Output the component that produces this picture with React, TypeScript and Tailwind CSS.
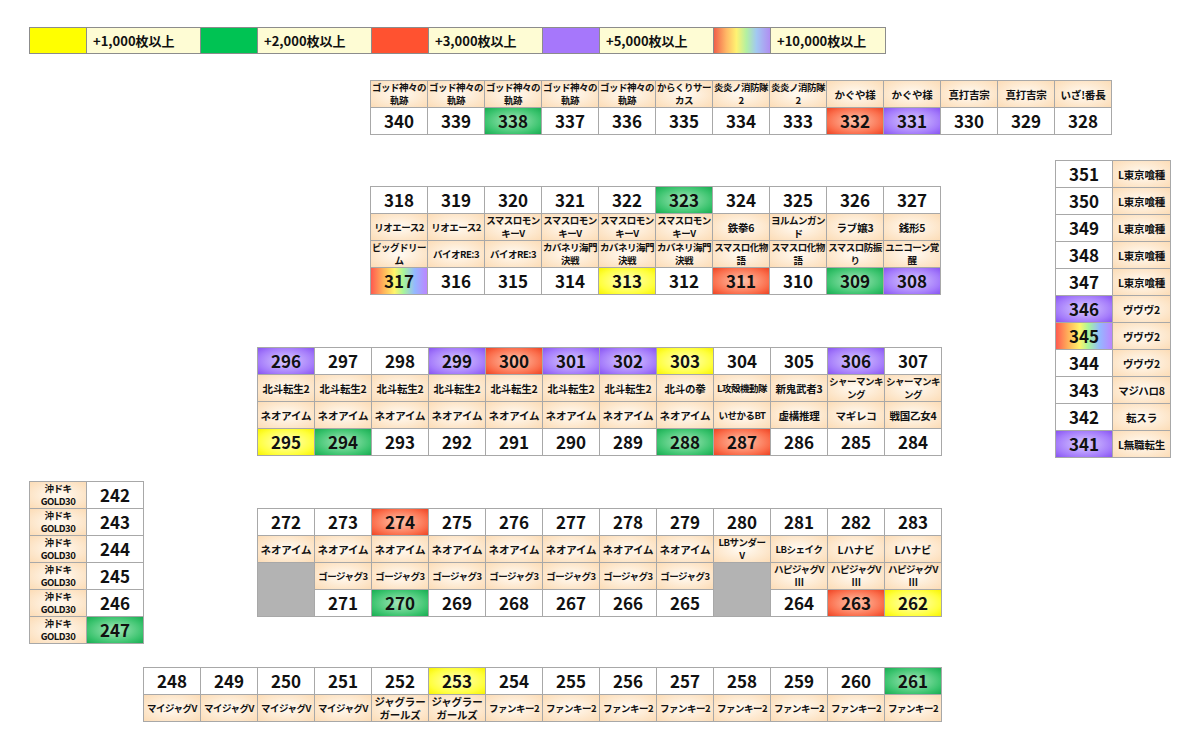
import { clsx } from 'clsx'

type Tone = 'y' | 'g' | 'r' | 'p' | 'rb'
type Cell =
  | { kind: 'num'; n: number; tone?: Tone }
  | { kind: 'name'; t: string }
  | { kind: 'gray' }

const n = (v: number, tone?: Tone): Cell => ({ kind: 'num', n: v, tone })
const t = (s: string): Cell => ({ kind: 'name', t: s })
const gray: Cell = { kind: 'gray' }
const rep = (s: string, k: number) => Array.from({ length: k }, () => t(s))

const TONE: Record<Tone, string> = {
  y: 'bg-[radial-gradient(ellipse_at_center,#ffffc4_0%,#ffff3c_70%,#f8f400_100%)]',
  g: 'bg-[radial-gradient(ellipse_at_center,#a6e8bb_0%,#3cc46f_70%,#18ad52_100%)]',
  r: 'bg-[radial-gradient(ellipse_at_center,#ffc6ad_0%,#fb6e4c_70%,#ee4424_100%)]',
  p: 'bg-[radial-gradient(ellipse_at_center,#d9ccff_0%,#a57cfb_70%,#8855f2_100%)]',
  rb: 'bg-[linear-gradient(90deg,#ff5a50_0%,#ffb25a_22%,#fff46a_42%,#a8f59a_58%,#94b8ff_78%,#bb86ff_100%)]',
}

const LINE = 'border-[#a8a8a8]'
const PEACH = 'bg-[radial-gradient(ellipse_at_center,#fff8ee_10%,#fcdcb6_100%)]'

function SheetCell({ cell }: { cell: Cell }) {
  if (cell.kind === 'gray') {
    return <div className={clsx('row-span-2 border-r border-b bg-[#b3b3b3]', LINE)} />
  }
  if (cell.kind === 'name') {
    // long kana lines need to be squeezed to fit the 57px column
    const long = cell.t.split('\n').some((l) => l.length >= 6)
    return (
      <div
        className={clsx(
          'flex items-center justify-center overflow-hidden border-r border-b text-center font-bold leading-[13px] whitespace-pre text-[#111]',
          long ? 'text-[9.5px] tracking-[-0.5px]' : 'text-[10.5px] tracking-[-0.2px]',
          LINE,
          PEACH
        )}
      >
        {cell.t}
      </div>
    )
  }
  return (
    <div
      className={clsx(
        'flex items-center justify-center border-r border-b text-[17px] font-bold text-[#111]',
        LINE,
        cell.tone ? TONE[cell.tone] : 'bg-white'
      )}
    >
      {cell.n}
    </div>
  )
}

function Sheet({ cols, cells, className }: { cols: string; cells: Cell[]; className?: string }) {
  return (
    <div className={clsx('grid w-max auto-rows-[27px] border-l border-t', LINE, cols, className)}>
      {cells.map((c, i) => (
        <SheetCell key={i} cell={c} />
      ))}
    </div>
  )
}

const LEGEND: { swatch: string; label: string }[] = [
  { swatch: 'bg-[#ffff00]', label: '+1,000枚以上' },
  { swatch: 'bg-[#00c353]', label: '+2,000枚以上' },
  { swatch: 'bg-[#ff5230]', label: '+3,000枚以上' },
  { swatch: 'bg-[#a677fb]', label: '+5,000枚以上' },
  {
    swatch: 'bg-[linear-gradient(90deg,#f0604a_0%,#ffb866_22%,#fff272_40%,#b2f0a2_58%,#a2c8f2_76%,#b08ef2_100%)]',
    label: '+10,000枚以上',
  },
]

const TOP: Cell[] = [
  ...rep('ゴッド神々の\n軌跡', 5),
  t('からくりサー\nカス'),
  ...rep('炎炎ノ消防隊\n2', 2),
  ...rep('かぐや様', 2),
  ...rep('真打吉宗', 2),
  t('いざ!番長'),
  n(340), n(339), n(338, 'g'), n(337), n(336), n(335), n(334), n(333),
  n(332, 'r'), n(331, 'p'), n(330), n(329), n(328),
]

const BLOCK2: Cell[] = [
  n(318), n(319), n(320), n(321), n(322), n(323, 'g'), n(324), n(325), n(326), n(327),
  ...rep('リオエース2', 2),
  ...rep('スマスロモン\nキーV', 4),
  t('鉄拳6'), t('ヨルムンガン\nド'), t('ラブ嬢3'), t('銭形5'),
  t('ビッグドリー\nム'),
  ...rep('バイオRE:3', 2),
  ...rep('カバネリ海門\n決戦', 3),
  ...rep('スマスロ化物\n語', 2),
  t('スマスロ防振\nり'), t('ユニコーン覚\n醒'),
  n(317, 'rb'), n(316), n(315), n(314), n(313, 'y'), n(312), n(311, 'r'), n(310), n(309, 'g'), n(308, 'p'),
]

const RIGHT: [number, string, Tone?][] = [
  [351, 'L東京喰種'],
  [350, 'L東京喰種'],
  [349, 'L東京喰種'],
  [348, 'L東京喰種'],
  [347, 'L東京喰種'],
  [346, 'ヴヴヴ2', 'p'],
  [345, 'ヴヴヴ2', 'rb'],
  [344, 'ヴヴヴ2'],
  [343, 'マジハロ8'],
  [342, '転スラ'],
  [341, 'L無職転生', 'p'],
]

const BLOCK3: Cell[] = [
  n(296, 'p'), n(297), n(298), n(299, 'p'), n(300, 'r'), n(301, 'p'), n(302, 'p'), n(303, 'y'),
  n(304), n(305), n(306, 'p'), n(307),
  ...rep('北斗転生2', 7),
  t('北斗の拳'), t('L攻殻機動隊'), t('新鬼武者3'),
  ...rep('シャーマンキ\nング', 2),
  ...rep('ネオアイム', 8),
  t('いせかるBT'), t('虚構推理'), t('マギレコ'), t('戦国乙女4'),
  n(295, 'y'), n(294, 'g'), n(293), n(292), n(291), n(290), n(289), n(288, 'g'), n(287, 'r'),
  n(286), n(285), n(284),
]

const LEFT: [string, number, Tone?][] = [
  ['沖ドキ\nGOLD30', 242],
  ['沖ドキ\nGOLD30', 243],
  ['沖ドキ\nGOLD30', 244],
  ['沖ドキ\nGOLD30', 245],
  ['沖ドキ\nGOLD30', 246],
  ['沖ドキ\nGOLD30', 247, 'g'],
]

const BLOCK4: Cell[] = [
  n(272), n(273), n(274, 'r'), n(275), n(276), n(277), n(278), n(279), n(280), n(281), n(282), n(283),
  ...rep('ネオアイム', 8),
  t('LBサンダー\nV'), t('LBシェイク'),
  ...rep('Lハナビ', 2),
  gray,
  ...rep('ゴージャグ3', 7),
  gray,
  ...rep('ハピジャグV\nⅢ', 3),
  n(271), n(270, 'g'), n(269), n(268), n(267), n(266), n(265),
  n(264), n(263, 'r'), n(262, 'y'),
]

const BLOCK5: Cell[] = [
  n(248), n(249), n(250), n(251), n(252), n(253, 'y'), n(254), n(255), n(256), n(257),
  n(258), n(259), n(260), n(261, 'g'),
  ...rep('マイジャグV', 4),
  ...rep('ジャグラー\nガールズ', 2),
  ...rep('ファンキー2', 8),
]

export default function App() {
  return (
    <div className="h-[748px] w-[1200px] overflow-hidden bg-white pt-[27px] font-['Noto_Sans_CJK_JP','Noto_Sans',sans-serif]">
      {/* Legend */}
      <div className="ml-[29px] flex h-[27px] w-max border border-[#8c8c8c]">
        {LEGEND.map((l, i) => (
          <div key={l.label} className="flex">
            <div className={clsx('w-[57px] border-r border-[#8c8c8c]', l.swatch)} />
            <div
              className={clsx(
                'flex w-[114px] items-center bg-[#fefcd4] pl-[6px] text-[13px] font-bold text-[#111]',
                i < LEGEND.length - 1 && 'border-r border-[#8c8c8c]'
              )}
            >
              {l.label}
            </div>
          </div>
        ))}
      </div>

      <Sheet cols="grid-cols-[repeat(13,57px)]" cells={TOP} className="ml-[370px] mt-[26px]" />

      <div className="mt-[25px] flex items-start">
        <div className="w-[1055px] shrink-0">
          <Sheet cols="grid-cols-[repeat(10,57px)]" cells={BLOCK2} className="ml-[370px] mt-[26px]" />
          <Sheet cols="grid-cols-[repeat(12,57px)]" cells={BLOCK3} className="ml-[257px] mt-[52px]" />
        </div>
        <Sheet
          cols="grid-cols-[57px_58px]"
          cells={RIGHT.flatMap(([v, s, tone]) => [n(v, tone), t(s)])}
        />
      </div>

      <div className="mt-[23px] flex items-start">
        <Sheet
          cols="grid-cols-[57px_57px]"
          cells={LEFT.flatMap(([s, v, tone]) => [t(s), n(v, tone)])}
          className="ml-[29px]"
        />
        <Sheet cols="grid-cols-[repeat(12,57px)]" cells={BLOCK4} className="ml-[113px] mt-[27px]" />
      </div>

      <Sheet cols="grid-cols-[repeat(14,57px)]" cells={BLOCK5} className="ml-[143px] mt-[23px]" />
    </div>
  )
}
